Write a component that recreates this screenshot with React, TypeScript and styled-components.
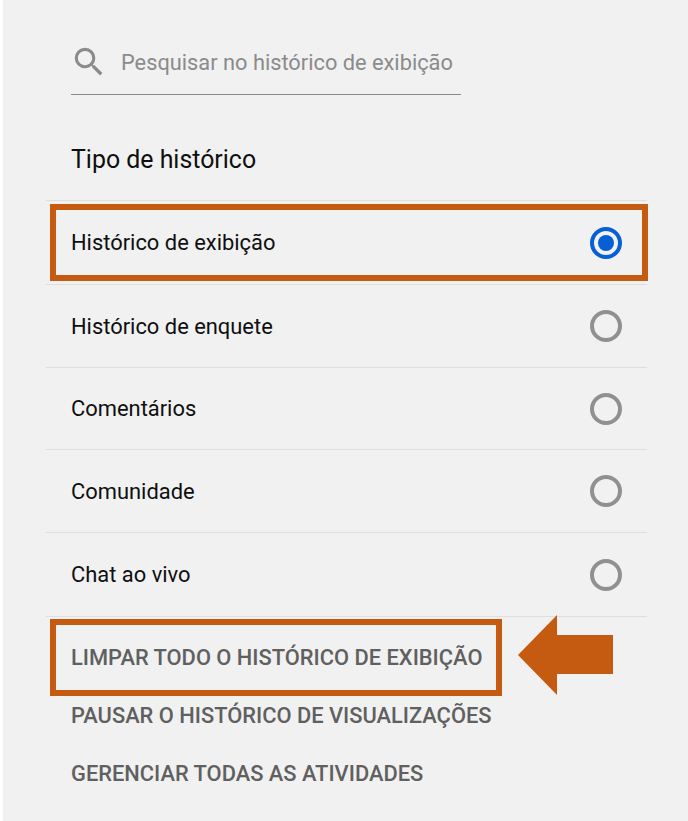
import React, {FC} from 'react';
import styled, {createGlobalStyle} from 'styled-components';

const GlobalStyle = createGlobalStyle`
  html, body {
    margin: 0;
    padding: 0;
    background: #ffffff;
    font-family: Roboto, "Liberation Sans", sans-serif;
  }
`

const Panel = styled.div`
  position: relative;
  box-sizing: border-box;
  width: 685px;
  height: 821px;
  margin-left: 3px;
  padding: 27px 0 0 43px;
  background: #f1f1f1;
  overflow: hidden;
`

const SearchBar = styled.div`
  display: flex;
  align-items: center;
  gap: 13px;
  box-sizing: border-box;
  width: 390px;
  height: 68px;
  margin-left: 25px;
  padding-top: 3px;
  border-bottom: 1.5px solid #8a8a8a;
`

const SearchIconWrap = styled.svg`
  flex: none;
  margin-left: -1px;
  fill: #8b8b8b;
`

const SearchText = styled.span`
  font-size: 21.8px;
  color: #8b8b8b;
  white-space: nowrap;
`

const Title = styled.h2`
  margin: 50px 0 25px 25px;
  font-size: 24.9px;
  line-height: 30px;
  font-weight: 400;
  color: #0f0f0f;
`

const List = styled.div`
  width: 601px;
  border-bottom: 1.5px solid #dedede;
`

const Row = styled.div<{rowHeight: number}>`
  position: relative;
  display: flex;
  align-items: center;
  justify-content: space-between;
  box-sizing: border-box;
  height: ${props => props.rowHeight}px;
  padding: 0 25px;
  border-top: 1.5px solid #dedede;
`

const RowLabel = styled.span`
  font-size: 21.9px;
  color: #0f0f0f;
`

const Radio = styled.span<{checked?: boolean}>`
  display: flex;
  align-items: center;
  justify-content: center;
  box-sizing: border-box;
  width: 32px;
  height: 32px;
  border-radius: 50%;
  border: 4px solid ${props => props.checked ? '#065fd4' : '#909090'};

  &::after {
    content: '';
    display: ${props => props.checked ? 'block' : 'none'};
    width: 16px;
    height: 16px;
    border-radius: 50%;
    background: #065fd4;
  }
`

const Actions = styled.div`
  margin: 12px 0 0 25px;
`

const Action = styled.div`
  position: relative;
  width: fit-content;
  font-size: 21.85px;
  line-height: 58px;
  font-weight: 500;
  color: #606060;
  text-transform: uppercase;
  white-space: nowrap;
`

const Highlight = styled.div`
  position: absolute;
  box-sizing: border-box;
  border: 6px solid #c55a11;
  pointer-events: none;
`

const RowHighlight = styled(Highlight)`
  left: 4px;
  right: -1px;
  top: 3px;
  height: 77px;
`

const ActionHighlight = styled(Highlight)`
  left: -21px;
  right: -20px;
  top: -10px;
  height: 77px;
`

const Arrow = styled.svg`
  position: absolute;
  left: 515px;
  top: 615px;
`

const SearchIcon: FC = () => (
    <SearchIconWrap width="38" height="38" viewBox="0 0 24 24">
        <path d="M15.5 14h-.79l-.28-.27A6.47 6.47 0 0 0 16 9.5 6.5 6.5 0 1 0 9.5 16c1.61 0 3.09-.59 4.23-1.57l.27.28v.79l5 4.99L20.49 19l-4.99-5zm-6 0C7.01 14 5 11.99 5 9.5S7.01 5 9.5 5 14 7.01 14 9.5 11.99 14 9.5 14z"/>
    </SearchIconWrap>
);

const historyTypes = [
    {name: 'Histórico de exibição', height: 84},
    {name: 'Histórico de enquete', height: 83},
    {name: 'Comentários', height: 82},
    {name: 'Comunidade', height: 83},
    {name: 'Chat ao vivo', height: 84},
];

const App: FC = () => {
    return (
        <>
            <GlobalStyle/>
            <Panel>
                <SearchBar>
                    <SearchIcon/>
                    <SearchText>Pesquisar no histórico de exibição</SearchText>
                </SearchBar>
                <Title>Tipo de histórico</Title>
                <List>
                    {historyTypes.map((item, i) => (
                        <Row key={item.name} rowHeight={item.height}>
                            <RowLabel>{item.name}</RowLabel>
                            <Radio checked={i === 0}/>
                            {i === 0 ? <RowHighlight/> : null}
                        </Row>
                    ))}
                </List>
                <Actions>
                    <Action>
                        Limpar todo o histórico de exibição
                        <ActionHighlight/>
                    </Action>
                    <Action>Pausar o histórico de visualizações</Action>
                    <Action>Gerenciar todas as atividades</Action>
                </Actions>
                <Arrow width="98" height="80" viewBox="0 0 98 80">
                    <polygon points="0,40 39,0 39,20 95,20 95,59 39,59 39,80" fill="#c55a11"/>
                </Arrow>
            </Panel>
        </>
    );
};

export default App;
